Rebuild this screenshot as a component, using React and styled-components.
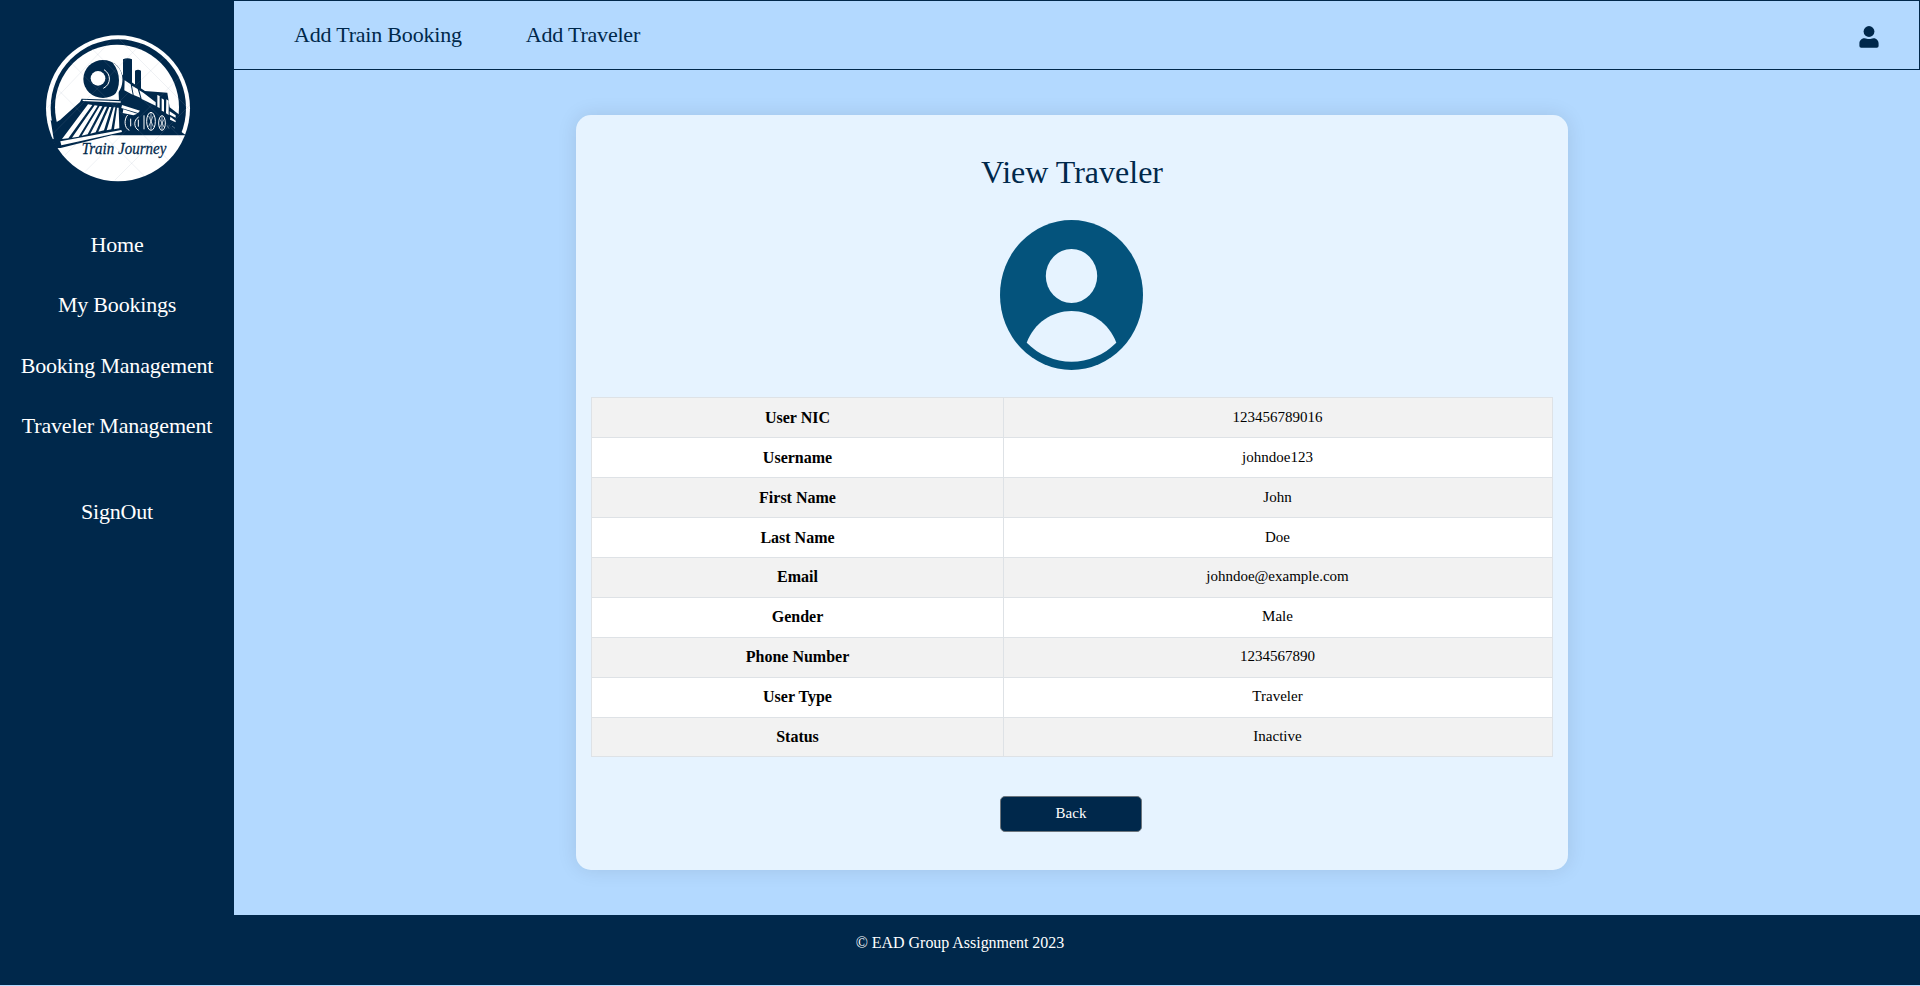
import React from "react";
import styled, { createGlobalStyle } from "styled-components";

const navy = "#00284b";
const sky = "#b3d9ff";

const GlobalStyle = createGlobalStyle`
  *, *::before, *::after { box-sizing: border-box; }
  body {
    margin: 0;
    background: ${sky};
    font-family: "Liberation Serif", "Times New Roman", serif;
    color: #000;
  }
`;

const Page = styled.div`
  height: 986px;
  display: flex;
  flex-direction: column;
  overflow: hidden;
`;

const Body = styled.div`
  display: flex;
  height: 915px;
`;

const Sidebar = styled.aside`
  width: 234px;
  flex: none;
  padding-top: 20px;
  background: ${navy};
  display: flex;
  flex-direction: column;
  align-items: center;
`;

const LogoSvg = styled.svg`
  width: 180px;
  height: 180px;
  margin-left: 6px;
  margin-bottom: 15px;
  align-self: center;
  display: block;
`;

const SideLink = styled.a`
  height: 60.4px;
  line-height: 60px;
  font-size: 22px;
  letter-spacing: -0.2px;
  color: #fff;
  white-space: nowrap;
  margin-top: ${(p) => p.$gap || 0}px;
`;

const Content = styled.div`
  flex: 1;
  display: flex;
  flex-direction: column;
`;

const TopBar = styled.header`
  height: 70px;
  flex: none;
  border: 1px solid ${navy};
  border-left: 0;
  padding: 0 40px 0 60px;
  display: flex;
  align-items: center;
`;

const TopLink = styled.a`
  font-size: 22px;
  letter-spacing: -0.2px;
  line-height: 30px;
  margin-right: 64px;
  padding-bottom: 1px;
  color: ${navy};
`;

const UserIcon = styled.svg`
  width: 20px;
  height: 22px;
  margin-left: auto;
  margin-top: 4px;
  fill: ${navy};
`;

const Card = styled.main`
  width: 992px;
  height: 755px;
  margin: 45px 0 0 342px;
  padding: 36px 15px 0;
  border-radius: 15px;
  background: #e6f3ff;
  box-shadow: 0 0 20px rgba(0, 0, 0, 0.1);
  display: flex;
  flex-direction: column;
  align-items: center;
`;

const Title = styled.h1`
  margin: 0;
  height: 69px;
  font-size: 32px;
  font-weight: 400;
  line-height: 42px;
  color: ${navy};
`;

const Avatar = styled.svg`
  width: 143px;
  height: 150px;
  flex: none;
  margin: 0 1px 27px 0;
`;

const Table = styled.dl`
  width: 100%;
  margin: 0 0 39px;
  flex: none;
  border: 1px solid #dee2e6;
  border-bottom: 0;
`;

const Row = styled.div`
  --text-line: 38px;
  display: grid;
  grid-template-columns: 412px 1fr;
  height: 40px;
  background: #fff;
  border-bottom: 1px solid #dee2e6;
  &:nth-child(odd) { background: #f2f2f2; }
  &:nth-child(n + 5) { --text-line: 36px; }
  &:last-child { height: 39px; }
`;

const Label = styled.dt`
  border-right: 1px solid #dee2e6;
  font-size: 16px;
  font-weight: 700;
  line-height: calc(var(--text-line) + 1px);
  text-align: center;
`;

const Value = styled.dd`
  margin: 0;
  padding-right: 1px;
  font-size: 15px;
  line-height: var(--text-line);
  text-align: center;
`;

const BackButton = styled.button`
  width: 142px;
  height: 36px;
  margin-right: 2px;
  padding: 0 0 1px;
  border: 1px solid #6c757d;
  border-radius: 5px;
  background: ${navy};
  color: #fff;
  font: 15px "Liberation Serif", serif;
`;

const Footer = styled.footer`
  height: 70px;
  background: ${navy};
  color: #fff;
  font-size: 16px;
  letter-spacing: -0.04px;
  line-height: 56px;
  text-align: center;
`;

function Logo() {
  return (
    <LogoSvg viewBox="0 0 540 540" role="img" aria-label="Train Journey">
      <defs>
        <clipPath id="disc"><ellipse cx="264" cy="265" rx="218" ry="221" /></clipPath>
        <clipPath id="upper"><path d="M0 0H540V345H0Z" /></clipPath>
      </defs>
      <ellipse cx="264" cy="265" rx="216" ry="219" fill="#fff" />
      <g clipPath="url(#upper)">
        <ellipse cx="265" cy="264" rx="203" ry="206" fill={navy} />
        <ellipse cx="261" cy="262" rx="186" ry="188" fill="#fff" />
      </g>
      <g clipPath="url(#disc)" fill={navy}>
        {/* ground and cowcatcher */}
        <path d="M76 308L90 300L150 246L155 236L272 240L284 285V332H449L468 346H245L92 384L40 386V364L71 357L62 300Z" />
        {/* boiler and cab */}
        <path d="M262 142L282 172L345 213L412 218L419 262L449 285V345H272Z" />
        {/* chimneys */}
        <path d="M279 118Q292 112 306 118V190H279ZM315 152Q324 147 333 152V208H315Z" />
        {/* front of the boiler */}
        <ellipse cx="219" cy="177" rx="59" ry="57" />
      </g>
      <g fill="none" stroke="#fff">
        <path d="M222 149C244 162 244 193 220 205" strokeWidth="3" />
        <path d="M158 241L272 246" strokeWidth="4" />
      </g>
      <g fill="#fff">
        <path d="M248 128C286 146 288 208 250 231C273 203 273 158 248 128Z" />
        <circle cx="204" cy="175" r="22" />
        <path d="M91 364L274 330L276 336L94 376Z" />
        <path d="M174 253L187 255L115 355L96 357ZM194 256L203 257L146 350L126 353ZM209 258L217 259L173 343L155 347ZM224 260L231 260L197 337L181 341ZM238 261L244 261L222 331L205 335ZM251 262L256 262L244 328L230 331ZM261 263L266 263L268 325L252 328Z" />
        <path d="M284 181L302 193L308 224L283 211ZM306 197L323 207L331 233L311 225ZM328 211L341 219L377 247V257L335 237Z" />
        <path d="M276 255L330 272L324 279L274 264ZM280 268L322 281L310 286L278 279Z" />
        <path d="M382 225L389 228V264L382 261ZM395 235L402 239V275L395 272ZM409 238L416 242V285L408 280ZM419 274L437 286V293L419 284ZM421 290L437 302V307L420 299Z" />
      </g>
      <g stroke="#fff" fill="none" strokeWidth="3">
        <path d="M293 285C281 298 283 325 298 331M302 296V319M326 291C310 300 311 323 326 331M325 299V320M342 286V328" />
        <ellipse cx="363" cy="304" rx="13" ry="27" />
        <path d="M363 279V329M356 288L370 320M370 287L356 320" strokeWidth="2" />
        <ellipse cx="396" cy="309" rx="10" ry="22" />
        <path d="M396 289V329M390 298L402 321M402 298L390 321" strokeWidth="2" />
        <path d="M411 316L417 326M426 318L435 325" strokeWidth="2" strokeOpacity="0.5" />
      </g>
      <g clipPath="url(#disc)" stroke="#8fa0b0" strokeOpacity="0.22" strokeWidth="2" fill="none">
        <path d="M50 175L355 480M95 100L455 460M165 65L480 380M265 55L480 270M50 265L240 65M65 345L340 65M105 405L410 105M165 455L460 160M255 480L480 255" />
      </g>
      <text x="155" y="402" fill={navy} stroke={navy} strokeWidth="0.8" fontFamily="Liberation Serif, serif" fontStyle="italic" fontSize="51" textLength="254" lengthAdjust="spacingAndGlyphs">
        Train Journey
      </text>
    </LogoSvg>
  );
}

const links = ["Home", "My Bookings", "Booking Management", "Traveler Management"];

const fields = [
  ["User NIC", "123456789016"],
  ["Username", "johndoe123"],
  ["First Name", "John"],
  ["Last Name", "Doe"],
  ["Email", "johndoe@example.com"],
  ["Gender", "Male"],
  ["Phone Number", "1234567890"],
  ["User Type", "Traveler"],
  ["Status", "Inactive"],
];

export default function App() {
  return (
    <Page>
      <GlobalStyle />
      <Body>
        <Sidebar>
          <Logo />
          {links.map((l) => <SideLink key={l}>{l}</SideLink>)}
          <SideLink $gap={25.5}>SignOut</SideLink>
        </Sidebar>
        <Content>
          <TopBar>
            <TopLink>Add Train Booking</TopLink>
            <TopLink>Add Traveler</TopLink>
            <UserIcon viewBox="0 0 20 22">
              <circle cx="10" cy="5.5" r="5.4" />
              <path d="M5.5 12.2C7.5 12.2 8 13 10 13S12.5 12.2 14.5 12.2C17.8 12.2 19.6 14.8 19.6 17.5V20Q19.6 21.8 17.8 21.8H2.2Q0.4 21.8 0.4 20V17.5C0.4 14.8 2.2 12.2 5.5 12.2Z" />
            </UserIcon>
          </TopBar>
          <Card>
            <Title>View Traveler</Title>
            <Avatar viewBox="0 0 143 150">
              <ellipse cx="71.5" cy="75" rx="71.5" ry="75" fill="#04537c" />
              <ellipse cx="71.5" cy="56" rx="25.7" ry="27" fill="#e6f3ff" />
              <path d="M26.7 122.7C34 103 52 91 71.5 91S109 103 116.3 122.7C104 135 88 141.7 71.5 141.7S39 135 26.7 122.7Z" fill="#e6f3ff" />
            </Avatar>
            <Table>
              {fields.map(([label, value]) => (
                <Row key={label}>
                  <Label>{label}</Label>
                  <Value>{value}</Value>
                </Row>
              ))}
            </Table>
            <BackButton>Back</BackButton>
          </Card>
        </Content>
      </Body>
      <Footer>© EAD Group Assignment 2023</Footer>
    </Page>
  );
}
